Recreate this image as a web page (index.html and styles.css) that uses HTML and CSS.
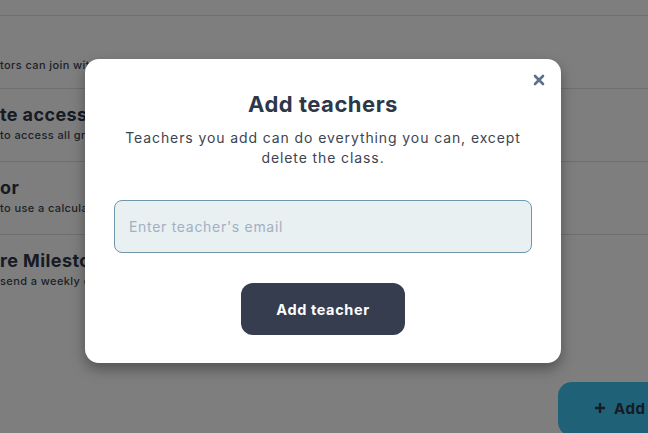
FILE: index.html
```html
<!DOCTYPE html>
<html lang="en">
<head>
<meta charset="utf-8">
<title>Add teachers</title>
<link rel="stylesheet" href="styles.css">
</head>
<body>
<div class="page">
  <div class="settings">
    <div class="row first">
      <div class="row-title">&nbsp;</div>
      <div class="row-sub">tors can join with</div>
    </div>
    <div class="row">
      <div class="row-title">te access</div>
      <div class="row-sub">to access all gra</div>
    </div>
    <div class="row">
      <div class="row-title">or</div>
      <div class="row-sub">to use a calcula</div>
    </div>
    <div class="row">
      <div class="row-title">re Milesto</div>
      <div class="row-sub">send a weekly e</div>
    </div>
  </div>
  <button class="fab"><svg class="plus" width="12" height="12" viewBox="0 0 12 12"><path d="M6 1 V11 M1 6 H11" stroke="currentColor" stroke-width="2.4"/></svg><span>Add</span></button>
</div>

<div class="overlay">
  <div class="modal">
    <button class="close" aria-label="Close">
      <svg width="12" height="12" viewBox="0 0 12 12"><path d="M2 2 L10 10 M10 2 L2 10" stroke="currentColor" stroke-width="2.6" stroke-linecap="round"/></svg>
    </button>
    <h2 class="title">Add teachers</h2>
    <p class="desc">Teachers you add can do everything you can, except delete the class.</p>
    <input class="email" type="email" placeholder="Enter teacher's email">
    <button class="submit">Add teacher</button>
  </div>
</div>
</body>
</html>
```
FILE: styles.css
```css
* { box-sizing: border-box; }
html, body { margin: 0; padding: 0; }
body {
  width: 648px;
  height: 433px;
  overflow: hidden;
  font-family: Inter, "Open Sans", sans-serif;
  letter-spacing: 0.7px;
  background: #ffffff;
  position: relative;
}
.page {
  height: 433px;
  background: #fcfcfc;
  overflow: hidden;
}
.settings {
  padding-top: 15px;
}
.row {
  height: 73px;
  border-top: 1px solid #dcdcdc;
  padding: 15px 0 0 0;
  white-space: nowrap;
  letter-spacing: 0.4px;
}
.row-title {
  font-size: 18px;
  font-weight: 700;
  line-height: 22px;
  color: #2d3748;
}
.row-sub {
  margin-top: 1px;
  font-size: 11px;
  font-weight: 500;
  line-height: 16px;
  color: #3d4451;
}
.row.first .row-sub { margin-top: 4px; }
.fab {
  position: absolute;
  left: 558px;
  top: 382px;
  width: 90px;
  height: 54px;
  border: none;
  border-radius: 14px 0 0 14px;
  background: #3ec2ee;
  color: #2d3748;
  font-family: inherit;
  font-size: 15px;
  font-weight: 700;
  letter-spacing: 0.6px;
  display: flex;
  align-items: center;
  gap: 8px;
  padding: 0 0 2px 36px;
  white-space: nowrap;
  overflow: hidden;
}
.plus { flex: none; }

.overlay {
  position: absolute;
  inset: 0;
  background: rgba(0, 0, 0, 0.5);
}
.modal {
  position: absolute;
  left: 85px;
  top: 59px;
  width: 476px;
  height: 304px;
  background: #ffffff;
  border-radius: 14px;
  box-shadow: 0 6px 14px rgba(0, 0, 0, 0.35);
  display: flex;
  flex-direction: column;
  align-items: center;
  padding: 31px 29px 0;
}
.close {
  position: absolute;
  right: 16px;
  top: 15px;
  background: none;
  border: none;
  padding: 0;
  width: 12px;
  height: 12px;
  color: #5b6f8f;
  display: flex;
}
.title {
  margin: 0;
  font-size: 22px;
  font-weight: 700;
  letter-spacing: 0.5px;
  line-height: 28px;
  color: #2d3748;
}
.desc {
  margin: 10px 0 0;
  width: 418px;
  text-align: center;
  font-size: 14px;
  letter-spacing: 0.9px;
  line-height: 20px;
  color: #3d4451;
}
.email {
  margin-top: 32px;
  width: 418px;
  height: 53px;
  border: 1px solid #6f96ab;
  border-radius: 8px;
  background: #e8f0f2;
  padding: 0 14px;
  font-family: inherit;
  font-size: 14px;
  letter-spacing: 0.7px;
  color: #2d3748;
  outline: none;
}
.email::placeholder { color: #a3afc2; }
.submit {
  margin-top: 30px;
  width: 164px;
  height: 52px;
  border: none;
  border-radius: 12px;
  background: #353d4e;
  color: #ffffff;
  font-family: inherit;
  font-size: 14.5px;
  letter-spacing: 0.6px;
  font-weight: 700;
}
```
